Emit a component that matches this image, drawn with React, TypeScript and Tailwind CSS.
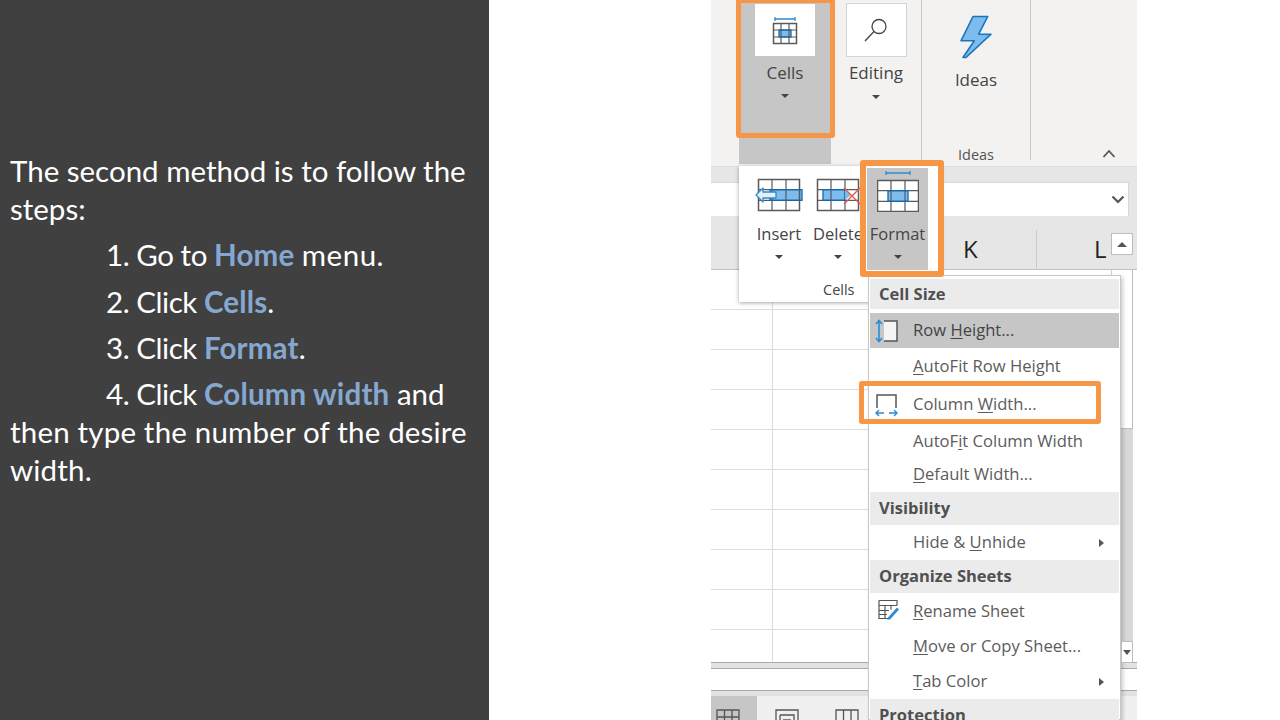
const blue = "#2e8bd0";

function Caret({ className = "" }: { className?: string }) {
  return <span className={"block w-0 h-0 border-x-[4px] border-x-transparent border-t-[4px] border-t-[#444444] " + className} />;
}

function Sheet({ w, h, hi, hiW }: { w: number; h: number; hi: number; hiW: number }) {
  const cx = w / 3;
  const cy = h / 3;
  return (
    <g>
      <rect x="0.5" y="0.5" width={w - 1} height={h - 1} fill="#ffffff" />
      <rect x={hi} y={cy} width={hiW} height={cy} fill="#7cbcef" />
      <rect x="0.5" y="0.5" width={w - 1} height={h - 1} fill="none" stroke="#5a5a5a" strokeWidth="1.5" />
      <path d={`M${cx} 0V${h}M${cx * 2} 0V${h}M0 ${cy}H${w}M0 ${cy * 2}H${w}`} stroke="#5a5a5a" strokeWidth="1.2" fill="none" />
      <rect x={hi} y={cy} width={hiW} height={cy} fill="none" stroke="#1769aa" strokeWidth="1.3" />
    </g>
  );
}

function RibbonButton({ label, icon, active }: { label: string; icon: React.ReactNode; active?: boolean }) {
  return (
    <div className={"flex flex-col items-center " + (active ? "bg-[#c6c6c6] w-[92px] h-[164px] pt-[4px]" : "w-[62px] pt-[3px]")}>
      {icon}
      <span className={"text-[17px] leading-[20px] text-[#444444] " + (active ? "mt-[7px]" : "mt-[6px]")}>{label}</span>
      <Caret className={active ? "mt-[11px]" : "mt-[12px]"} />
    </div>
  );
}

function PanelButton({ label, width, active, icon }: { label: string; width: number; active?: boolean; icon: React.ReactNode }) {
  return (
    <div style={{ width }} className={"flex flex-col items-center h-[102px] shrink-0 " + (active ? "bg-[#c6c6c6]" : "")}>
      <div className="h-[44px] flex items-end">{icon}</div>
      <span className="mt-[12px] text-[16.5px] leading-[20px] text-[#444444] whitespace-nowrap">{label}</span>
      <Caret className="mt-[11px]" />
    </div>
  );
}

function MenuHeader({ label, h = 33 }: { label: string; h?: number }) {
  return (
    <div style={{ height: h }} className="bg-[#ebebeb] pl-[9px] flex items-center text-[16.5px] font-bold text-[#505050] shrink-0">
      {label}
    </div>
  );
}

function MenuItem({ before, u, after, icon, arrow, active, h = 35 }: { before?: string; u: string; after: string; icon?: React.ReactNode; arrow?: boolean; active?: boolean; h?: number }) {
  return (
    <div style={{ height: h }} className={"relative flex items-center pl-[43px] text-[16.6px] shrink-0 " + (active ? "bg-[#c6c6c6] text-[#444444]" : "text-[#5c5c5c]")}>
      {icon && <span className="absolute left-[4px] top-1/2 -translate-y-1/2 flex">{icon}</span>}
      <span className="whitespace-nowrap">
        {before}
        <span className="underline underline-offset-2">{u}</span>
        {after}
      </span>
      {arrow && <span className="absolute right-[15px] top-1/2 -translate-y-1/2 w-0 h-0 border-y-[4px] border-y-transparent border-l-[5px] border-l-[#555555]" />}
    </div>
  );
}

function Step({ lead, children, top }: { lead: string; children: React.ReactNode; top: number }) {
  return (
    <p style={{ marginTop: top }} className="pl-[96px]">
      <span className="tracking-[-0.45px]">{lead} </span>
      {children}
    </p>
  );
}

function Hl({ children }: { children: React.ReactNode }) {
  return <b className="font-bold tracking-[0.15px] text-[#86a8d0]">{children}</b>;
}

const rows = [0, 1, 2, 3, 4, 5, 6, 7, 8];

export default function App() {
  return (
    <div className="flex w-[1280px] h-[720px] overflow-hidden bg-white font-['Open_Sans',sans-serif]">
      {/* slide text */}
      <div className="w-[489px] h-full bg-[#404040] pl-[10px] pt-[152px] text-white text-[29.5px] leading-[38px] font-['Lato',sans-serif] shrink-0">
        <p className="w-[470px]">The second method is to follow the steps:</p>
        <Step lead="1. Go to" top={8}><Hl>Home</Hl> <span className="tracking-[0.5px]">menu.</span></Step>
        <Step lead="2. Click" top={9}><Hl>Cells</Hl>.</Step>
        <Step lead="3. Click" top={8}><Hl>Format</Hl>.</Step>
        <Step lead="4. Click" top={8}><Hl>Column width</Hl> and</Step>
        <p className="w-[470px] tracking-[0.18px]">then type the number of the desire width.</p>
      </div>

      {/* excel screenshot */}
      <div className="relative ml-[222px] w-[426px] h-full overflow-hidden bg-white flex flex-col">
        {/* ribbon */}
        <div className="h-[166px] bg-[#f3f2f1] flex shrink-0 pl-[28px]">
          <RibbonButton
            label="Cells"
            active
            icon={
              <div className="w-[60px] h-[52px] bg-white flex items-center justify-center">
                <svg width="26" height="30" viewBox="0 0 26 30">
                  <path d="M3 4H23M3 2V6M23 2V6" stroke={blue} strokeWidth="1.3" fill="none" />
                  <g transform="translate(1 8)">
                    <Sheet w={24} h={21} hi={6} hiW={12} />
                  </g>
                </svg>
              </div>
            }
          />
          <div className="w-[14px]" />
          <RibbonButton
            label="Editing"
            icon={
              <div className="w-[61px] h-[54px] bg-white border border-[#d4d4d4] flex items-center justify-center">
                <svg width="26" height="26" viewBox="0 0 26 26" fill="none" stroke="#444444" strokeWidth="1.3">
                  <circle cx="16" cy="9.5" r="7" />
                  <path d="M11 14.5L2 24" />
                </svg>
              </div>
            }
          />
          <div className="w-[14px]" />
          <div className="w-px h-[160px] bg-[#c8c8c8]" />
          <div className="w-[108px] flex flex-col items-center h-[160px]">
            <svg width="34" height="44" viewBox="0 0 34 44" className="mt-[15px]">
              <path d="M14 1.500H28.700L19.700 19.200H32L7 42.500H4L15.300 25.800H2Z" fill="#7cbcef" stroke="#1b75bb" strokeWidth="1.6" strokeLinejoin="round" />
            </svg>
            <span className="mt-[10px] text-[17px] leading-[22px] text-[#444444]">Ideas</span>
            <span className="mt-auto text-[14.5px] leading-[18px] text-[#555555] -mb-[4px]">Ideas</span>
          </div>
          <div className="w-px h-[160px] bg-[#c8c8c8]" />
          <div className="flex-1 relative">
            <svg width="14" height="9" viewBox="0 0 14 9" className="absolute left-[71px] top-[149px]" fill="none" stroke="#555555" strokeWidth="1.8">
              <path d="M1.500 8L7 2L12.500 8" />
            </svg>
          </div>
        </div>

        {/* formula bar */}
        <div className="h-[50px] bg-[#e6e6e6] shrink-0 border-t border-[#dcdcdc] pt-[15px] pr-[8px]">
          <div className="h-[35px] bg-white border border-l-0 border-[#d8d8d8] relative">
            <svg width="14" height="9" viewBox="0 0 14 9" className="absolute right-[3px] top-[12px]" fill="none" stroke="#555555" strokeWidth="2.2">
              <path d="M1.500 1.500L7 7L12.500 1.500" />
            </svg>
          </div>
        </div>

        {/* column headers */}
        <div className="h-[54px] bg-[#e6e6e6] shrink-0 relative border-b border-b-[#c0c0c0]">
          <div className="absolute left-[252px] top-[19px] text-[24px] leading-[28px] text-[#222222]">K</div>
          <div className="absolute left-[325px] top-[14px] w-px h-[40px] bg-[#c9c9c9]" />
          <div className="absolute left-[383px] top-[19px] text-[24px] leading-[28px] text-[#222222]">L</div>
        </div>

        {/* grid and vertical scrollbar */}
        <div className="h-[392px] flex shrink-0">
          <div className="w-[400px] overflow-hidden pt-[39px]">
            {rows.map((r) => (
              <div key={r} className="h-[40px] border-t border-t-[#dcdcdc] relative">
                <span className="absolute left-[61px] -top-[40px] w-px h-[80px] bg-[#dcdcdc]" />
              </div>
            ))}
          </div>
          <div className="w-[22px] flex flex-col border-l border-[#d0d0d0]">
            <div className="h-[159px] bg-white border-b border-[#bdbdbd] border-r" />
            <div className="flex-1 bg-[#d8d8d8]" />
          </div>
        </div>

        {/* horizontal scrollbar */}
        <div className="h-[7px] bg-[#e2e2e2] border-y border-y-[#aaaaaa] shrink-0" />
        <div className="h-[21px] bg-white shrink-0" />
        <div className="h-[6px] bg-[#e2e2e2] border-t border-t-[#aaaaaa] shrink-0" />

        {/* status */}
        <div className="flex-1 bg-[#f0f0f0] flex items-start overflow-hidden">
          <div className="w-[46px] h-full bg-[#c6c6c6] pl-[5px] pt-[13px]">
            <svg width="24" height="22" viewBox="0 0 24 22"><path d="M1 1H23V22H1ZM1 8H23M1 15H23M8.500 1V22M16 1V22" fill="none" stroke="#555555" strokeWidth="1.3" /></svg>
          </div>
          <div className="ml-[18px] pt-[13px]">
            <svg width="24" height="22" viewBox="0 0 24 22"><path d="M1 1H23V22H1ZM5 6H19V22M5 6V22M8 11H16M8 15H16" fill="none" stroke="#555555" strokeWidth="1.3" /></svg>
          </div>
          <div className="ml-[36px] pt-[13px]">
            <svg width="24" height="22" viewBox="0 0 24 22"><path d="M1 1H23V22H1ZM8.500 1V22M16 1V22" fill="none" stroke="#555555" strokeWidth="1.3" /></svg>
          </div>
        </div>

        {/* cells popup */}
        <div className="absolute left-[28px] top-[166px] w-[202px] h-[136px] bg-white shadow-[0_1px_4px_rgba(0,0,0,0.35)] flex pl-[10px] pt-[2px]">
          <PanelButton
            label="Insert"
            width={60}
            icon={
              <svg width="48" height="34" viewBox="0 0 48 34">
                <g transform="translate(3 1)"><Sheet w={42} h={32} hi={12} hiW={32} /></g>
                <path d="M1 17L8 10V14H21V20H8V24Z" fill="#e4f1fb" stroke={blue} strokeWidth="1.3" strokeLinejoin="round" />
              </svg>
            }
          />
          <PanelButton
            label="Delete"
            width={58}
            icon={
              <svg width="46" height="34" viewBox="0 0 46 34">
                <g transform="translate(2 1)"><Sheet w={42} h={32} hi={6} hiW={22} /></g>
                <path d="M30 12L36 17L30 22Z" fill="#7cbcef" />
                <path d="M29 10L45 26M45 10L29 26" stroke="#e2574c" strokeWidth="1.4" />
              </svg>
            }
          />
          <PanelButton
            label="Format"
            width={61}
            active
            icon={
              <svg width="42" height="42" viewBox="0 0 42 42">
                <path d="M9 3H33M9 1V5M33 1V5" stroke={blue} strokeWidth="1.3" fill="none" />
                <g transform="translate(0 10)"><Sheet w={42} h={32} hi={11} hiW={20} /></g>
              </svg>
            }
          />
          <span className="absolute left-[84px] bottom-[3px] text-[14.5px] leading-[18px] text-[#444444]">Cells</span>
        </div>

        {/* format dropdown */}
        <div className="absolute left-[157px] top-[275px] w-[253px] h-[445px] bg-white border border-[#c8c8c8] shadow-[2px_2px_4px_rgba(0,0,0,0.2)] px-px pt-[3px] flex flex-col">
          <MenuHeader label="Cell Size" h={30} />
          <div className="h-[4px] shrink-0" />
          <MenuItem
            u="H"
            before="Row "
            after="eight..."
            active
            icon={
              <svg width="26" height="26" viewBox="0 0 26 26" fill="none">
                <path d="M10 3H23V23H10" fill="#f4f4f4" stroke="#555555" strokeWidth="1.5" />
                <path d="M5 3V23M2 6L5 2.500L8 6M2 20L5 23.500L8 20" stroke={blue} strokeWidth="1.6" />
              </svg>
            }
          />
          <MenuItem u="A" after="utoFit Row Height" h={36} />
          <MenuItem
            before="Column "
            u="W"
            after="idth..."
            h={41}
            icon={
              <svg width="26" height="24" viewBox="0 0 26 24" fill="none">
                <path d="M3 15V2H22V15" stroke="#555555" strokeWidth="1.5" />
                <path d="M2 20H10M5 17L2 20L5 23M15 20H23M20 17L23 20L20 23" stroke={blue} strokeWidth="1.4" />
              </svg>
            }
          />
          <MenuItem before="AutoF" u="i" after="t Column Width" h={32} />
          <MenuItem u="D" after="efault Width..." h={35} />
          <MenuHeader label="Visibility" />
          <MenuItem before="Hide & " u="U" after="nhide" arrow />
          <MenuHeader label="Organize Sheets" />
          <MenuItem
            u="R"
            after="ename Sheet"
            h={36}
            icon={
              <svg width="24" height="22" viewBox="0 0 24 22" className="-mt-[3px] ml-[3px]" fill="none">
                <path d="M2 2H20V7M2 2V20H11M2 7H20M2 12H12M2 16H10M8 7V20M14 7V11" stroke="#555555" strokeWidth="1.2" />
                <path d="M11 19L20 9L22 11L13 21L10 21Z" fill="#2e8bd0" />
              </svg>
            }
          />
          <MenuItem u="M" after="ove or Copy Sheet..." />
          <MenuItem u="T" after="ab Color" arrow h={35} />
          <MenuHeader label="Protection" />
        </div>

        {/* scrollbar arrows */}
        <div className="absolute left-[400px] top-[233px] w-[22px] h-[22px] bg-white border border-[#bdbdbd] flex items-center justify-center">
          <span className="w-0 h-0 border-x-[5px] border-x-transparent border-b-[5px] border-b-[#555555]" />
        </div>
        <div className="absolute left-[410px] top-[641px] w-[12px] h-[22px] bg-white border border-[#bdbdbd] flex items-center justify-center">
          <span className="w-0 h-0 border-x-[4px] border-x-transparent border-t-[5px] border-t-[#555555]" />
        </div>

        {/* orange callouts */}
        <div className="absolute left-[25px] -top-[2px] w-[99px] h-[140px] border-[5px] border-[#f79646] rounded-[3px]" />
        <div className="absolute left-[149px] top-[160px] w-[84px] h-[117px] border-[6px] border-[#f79646] rounded-[3px]" />
        <div className="absolute left-[148px] top-[381px] w-[242px] h-[43px] border-[5px] border-[#f79646] rounded-[3px]" />
      </div>
    </div>
  );
}
